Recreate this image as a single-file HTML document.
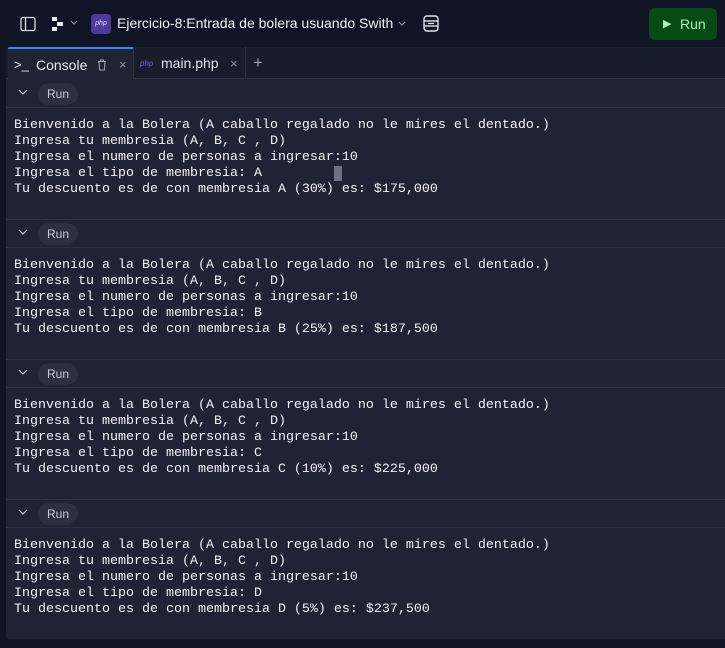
<!DOCTYPE html>
<html><head><meta charset="utf-8"><style>
*{margin:0;padding:0;box-sizing:border-box}
body{width:725px;height:648px;background:#0f1524;font-family:"Liberation Sans",sans-serif;color:#e6e8ee;position:relative;overflow:hidden}
.top{position:absolute;left:0;top:0;width:725px;height:47px}
.panel{position:absolute;left:6px;top:47px;width:719px;height:592px;background:#1e2433;border-radius:4px 0 0 4px;overflow:hidden}
.tabs{position:absolute;left:0;top:0;width:719px;height:32px;background:#171d2b;border-bottom:1px solid #2c3344}
.tab{position:absolute;top:0;height:32px;font-size:14px;display:flex;align-items:center}
.sec{position:absolute;left:0;width:719px;height:140px}
.hdr{height:28px;border-bottom:1px solid #2c3344;position:relative}
.pill{position:absolute;left:32px;top:3px;width:40px;height:22px;border-radius:11px;background:#2a3142;color:#c5cad6;font-size:12px;text-align:center;line-height:22px}
.chev{position:absolute;left:12px;top:9px}
pre{font-family:"Liberation Mono",monospace;font-size:13.33px;line-height:16px;color:#f2f3f5;padding:10px 0 0 8px}
.sep{border-top:1px solid #2c3344}
</style></head><body>
<div class="top">
 <svg style="position:absolute;left:20px;top:16px" width="16" height="16" viewBox="0 0 16 16"><rect x="1" y="1.5" width="14" height="13" rx="2" fill="none" stroke="#d8dbe2" stroke-width="1.3"/><line x1="5.5" y1="2" x2="5.5" y2="14" stroke="#d8dbe2" stroke-width="1.3"/></svg>
 <svg style="position:absolute;left:51px;top:16px" width="16" height="16" viewBox="0 0 16 16"><rect x="1" y="1" width="5" height="4" fill="#f0f0f0"/><rect x="6" y="6" width="6" height="4" fill="#f0f0f0"/><rect x="1" y="11" width="5" height="4" fill="#f0f0f0"/></svg>
 <svg style="position:absolute;left:70px;top:20px" width="8" height="6" viewBox="0 0 8 6"><path d="M1 1L4 4L7 1" fill="none" stroke="#8a90a0" stroke-width="1.2"/></svg>
 <div style="position:absolute;left:91px;top:14px;width:20px;height:20px;border-radius:4px;background:#4b3a9a;color:#e0d8ff;font-size:7px;font-style:italic;text-align:center;line-height:20px">php</div>
 <div style="position:absolute;left:117px;top:15px;font-size:14px;color:#f0f2f5">Ejercicio-8:Entrada de bolera usuando Swith</div>
 <svg style="position:absolute;left:398px;top:21px" width="8" height="6" viewBox="0 0 8 6"><path d="M1 1L4 4L7 1" fill="none" stroke="#8a90a0" stroke-width="1.2"/></svg>
 <svg style="position:absolute;left:423px;top:15px" width="16" height="17" viewBox="0 0 16 17"><rect x="1" y="1" width="14" height="15" rx="3" fill="none" stroke="#e0e3ea" stroke-width="1.4"/><line x1="1" y1="6" x2="15" y2="6" stroke="#e0e3ea" stroke-width="1.4"/><line x1="1" y1="11" x2="15" y2="11" stroke="#e0e3ea" stroke-width="1.4"/><line x1="5" y1="8.5" x2="11" y2="8.5" stroke="#e0e3ea" stroke-width="1.2"/></svg>
 <div style="position:absolute;left:649px;top:8px;width:68px;height:32px;border-radius:5px;background:#064a16;color:#a7f3b3;font-size:14px;line-height:32px"><span style="position:absolute;left:14px;font-size:11px">▶</span><span style="position:absolute;left:31px">Run</span></div>
</div>
<div class="panel">
 <div class="tabs">
  <div class="tab" style="left:2px;width:125px;background:#1e2433;border-top:2px solid #3b82f6;height:33px">
   <span style="position:absolute;left:6px;font-size:13px;color:#e6e8ee">&gt;_</span>
   <span style="position:absolute;left:28px">Console</span>
   <svg style="position:absolute;left:89px;top:10px" width="10" height="12" viewBox="0 0 10 12"><path d="M1 2.5H9M3.5 2.5V1H6.5V2.5M2 2.5L2.6 11H7.4L8 2.5" fill="none" stroke="#9aa0ad" stroke-width="1.1"/></svg>
   <span style="position:absolute;left:111px;color:#8a90a0;font-size:13px">×</span>
  </div>
  <div style="position:absolute;left:127px;top:0;width:1px;height:32px;background:#2c3344"></div>
  <div class="tab" style="left:128px;width:112px">
   <span style="position:absolute;left:6px;font-size:8px;font-style:italic;color:#7c5fd6">php</span>
   <span style="position:absolute;left:27px;color:#e0e3ea">main.php</span>
   <span style="position:absolute;left:96px;color:#8a90a0;font-size:13px">×</span>
  </div>
  <div style="position:absolute;left:239px;top:0;width:1px;height:32px;background:#2c3344"></div>
  <div class="tab" style="left:247px;color:#9aa0ad;font-size:17px">+</div>
 </div>

 <div class="sec" style="top:33px">
  <div class="hdr"><svg class="chev" width="10" height="6" viewBox="0 0 10 6"><path d="M1 1L5 5L9 1" fill="none" stroke="#c0c5d0" stroke-width="1.2"/></svg><div class="pill">Run</div></div>
  <pre>Bienvenido a la Bolera (A caballo regalado no le mires el dentado.)
Ingresa tu membresia (A, B, C , D)
Ingresa el numero de personas a ingresar:10
Ingresa el tipo de membresia: A         <span style="background:#6b7280;color:#6b7280"> </span>
Tu descuento es de con membresia A (30%) es: $175,000</pre>
 </div>
 <div class="sec sep" style="top:172px">
  <div class="hdr"><svg class="chev" width="10" height="6" viewBox="0 0 10 6"><path d="M1 1L5 5L9 1" fill="none" stroke="#c0c5d0" stroke-width="1.2"/></svg><div class="pill">Run</div></div>
  <pre>Bienvenido a la Bolera (A caballo regalado no le mires el dentado.)
Ingresa tu membresia (A, B, C , D)
Ingresa el numero de personas a ingresar:10
Ingresa el tipo de membresia: B
Tu descuento es de con membresia B (25%) es: $187,500</pre>
 </div>
 <div class="sec sep" style="top:312px">
  <div class="hdr"><svg class="chev" width="10" height="6" viewBox="0 0 10 6"><path d="M1 1L5 5L9 1" fill="none" stroke="#c0c5d0" stroke-width="1.2"/></svg><div class="pill">Run</div></div>
  <pre>Bienvenido a la Bolera (A caballo regalado no le mires el dentado.)
Ingresa tu membresia (A, B, C , D)
Ingresa el numero de personas a ingresar:10
Ingresa el tipo de membresia: C
Tu descuento es de con membresia C (10%) es: $225,000</pre>
 </div>
 <div class="sec sep" style="top:452px">
  <div class="hdr"><svg class="chev" width="10" height="6" viewBox="0 0 10 6"><path d="M1 1L5 5L9 1" fill="none" stroke="#c0c5d0" stroke-width="1.2"/></svg><div class="pill">Run</div></div>
  <pre>Bienvenido a la Bolera (A caballo regalado no le mires el dentado.)
Ingresa tu membresia (A, B, C , D)
Ingresa el numero de personas a ingresar:10
Ingresa el tipo de membresia: D
Tu descuento es de con membresia D (5%) es: $237,500</pre>
 </div>
</div>
</body></html>
